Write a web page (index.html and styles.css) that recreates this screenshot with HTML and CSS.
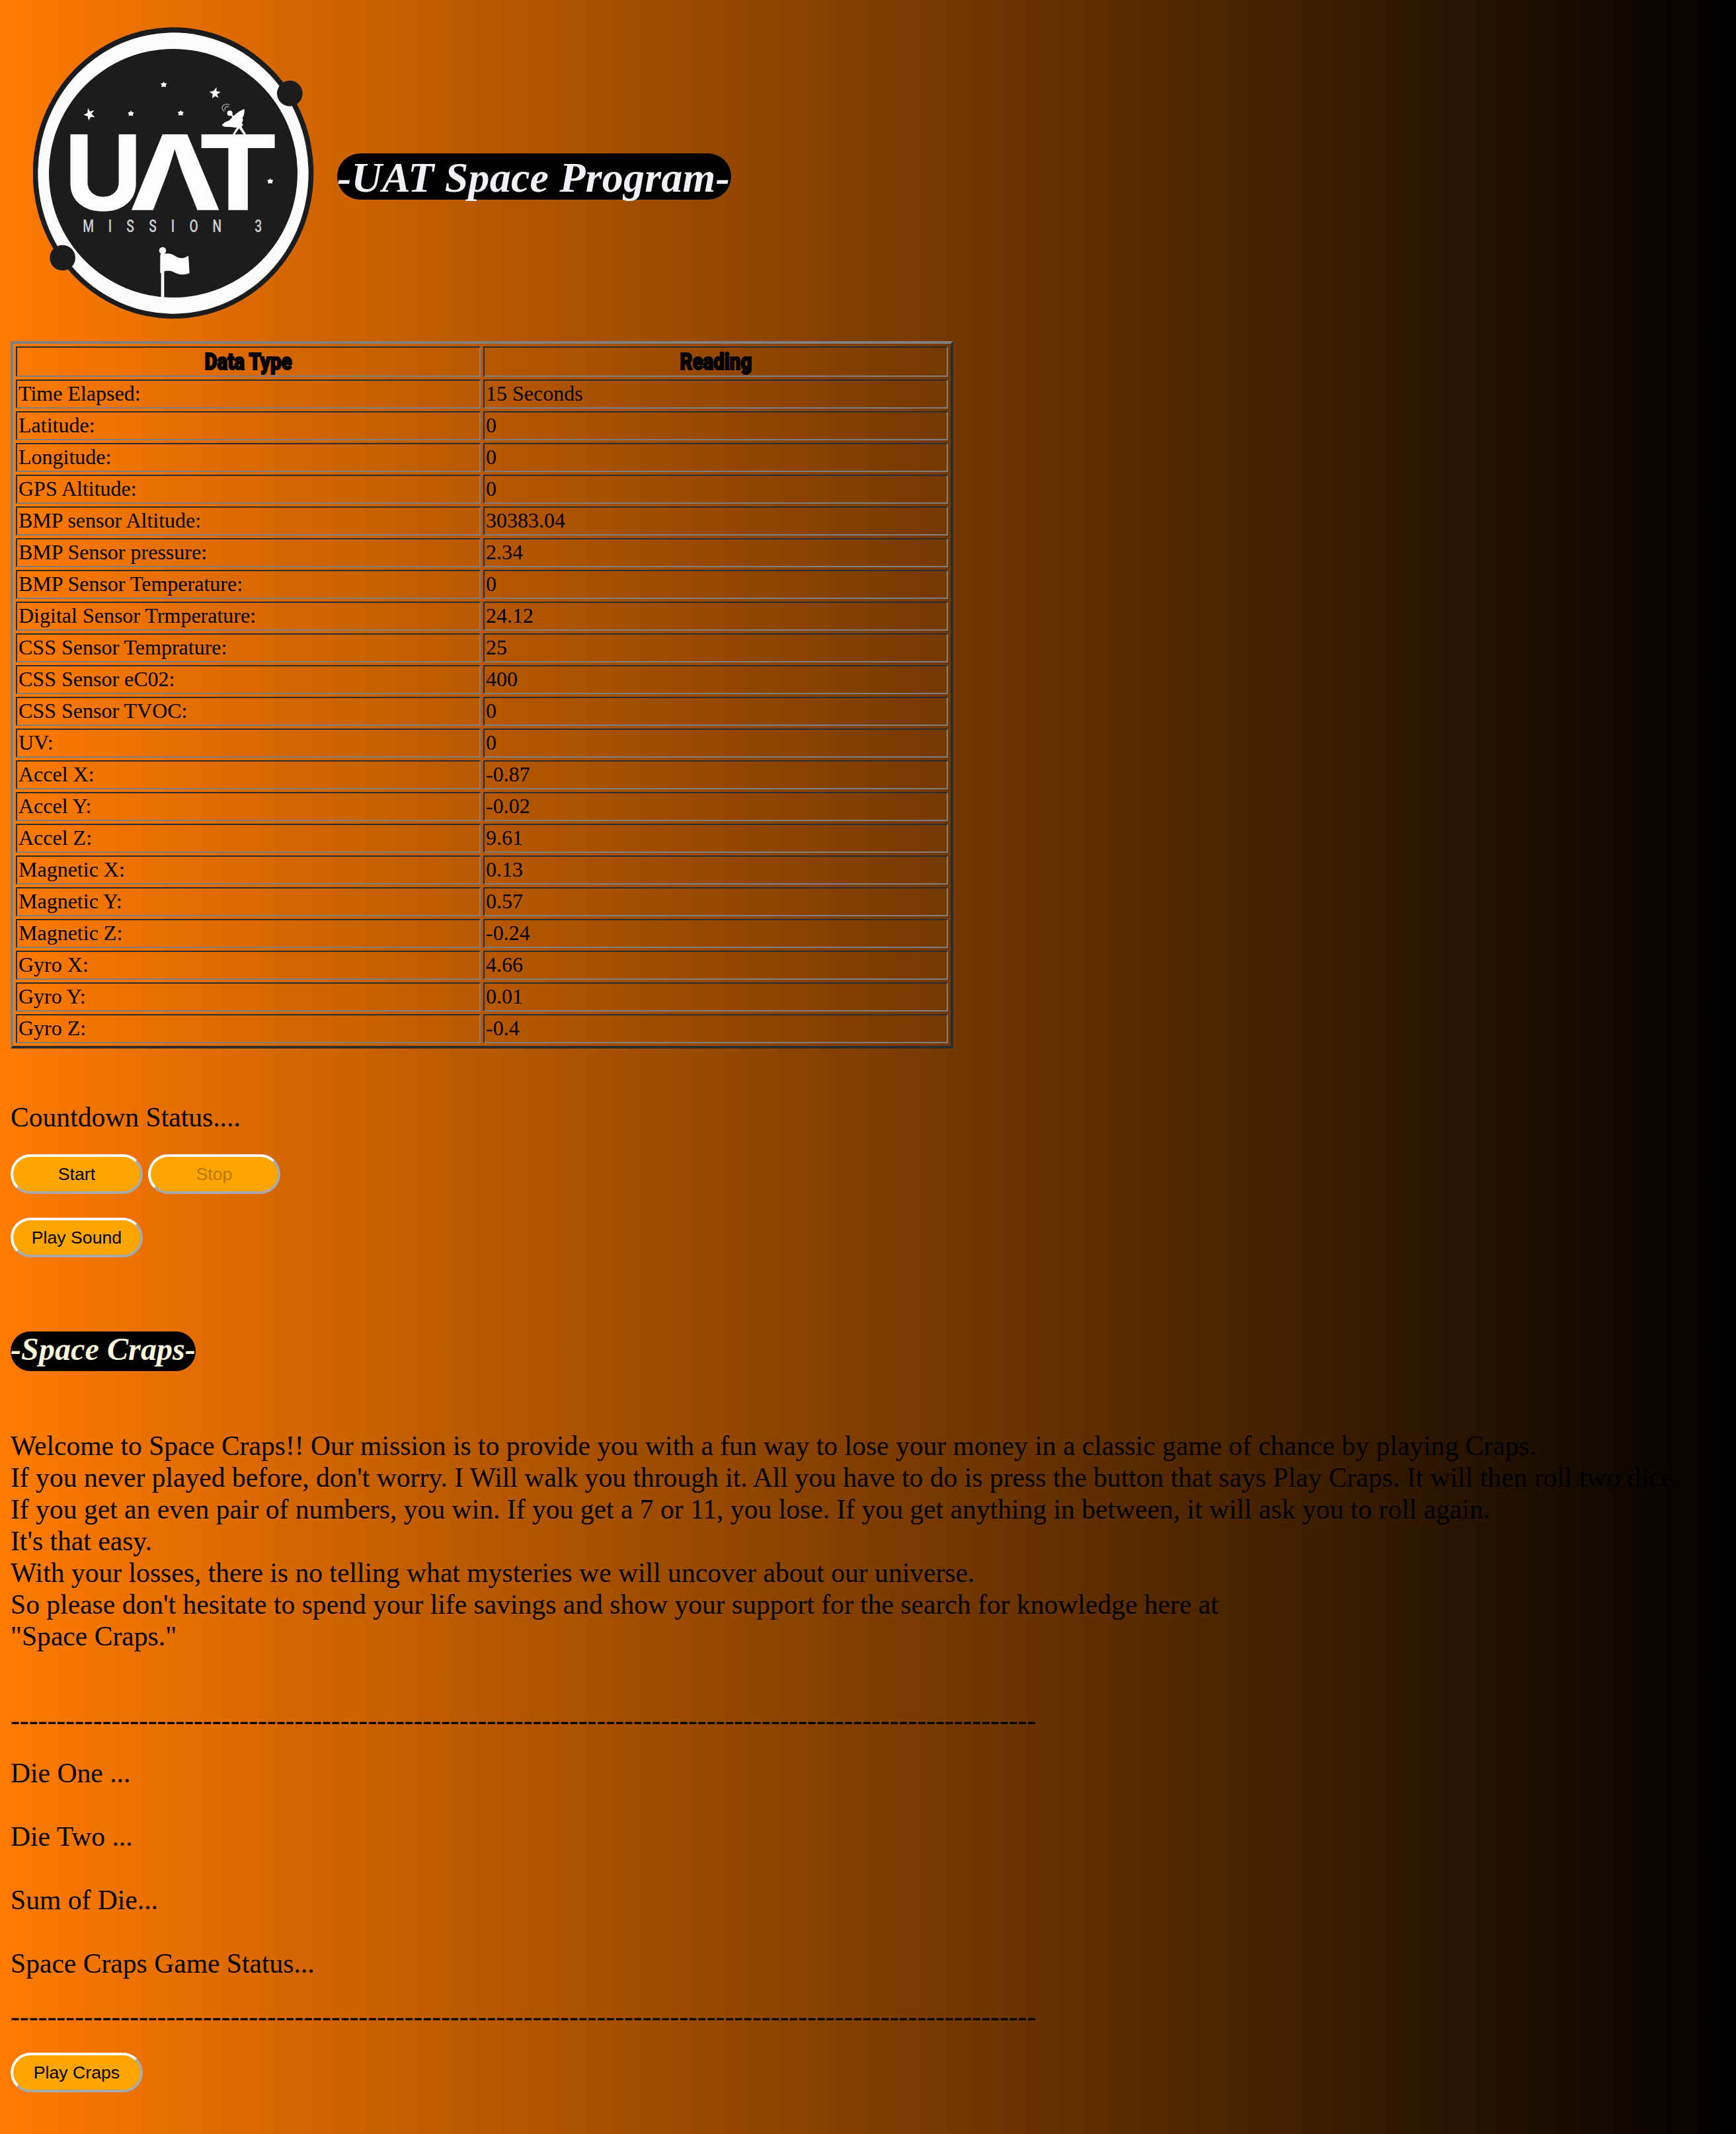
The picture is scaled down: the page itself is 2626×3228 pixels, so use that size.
FILE: index.html
```html
<!DOCTYPE html>
<html lang="en">
<head>
<meta charset="utf-8">
<title>UAT Space Program</title>
<link rel="stylesheet" href="styles.css">
</head>
<body>
<header class="header">
  <svg class="logo" viewBox="150 120 1278 1332" role="img" aria-label="UAT Mission 3">
    <ellipse cx="786" cy="785" rx="637" ry="661" fill="#1c1c1e"/>
    <ellipse cx="786" cy="786" rx="614" ry="638" fill="#fcfcfb"/>
    <circle cx="786" cy="786" r="564" fill="#1c1c1e"/>
    <circle cx="1315" cy="424" r="58" fill="#1c1c1e"/>
    <circle cx="284" cy="1170" r="58" fill="#1c1c1e"/>
    <g fill="#fff">
      <path d="M399 490l9 16 20-6-13 17 16 15-19-2-10 17-4-20-19-6 18-8z"/>
      <path d="M983 396l-1 18 19 3-16 11 7 17-15-9-14 10 2-19-15-11 18-3z"/>
      <path id="s" d="M743 371l5 7 9 1-5 8 1 8-10-2-10 2 1-8-5-8 9-1z"/>
      <use href="#s" x="-149" y="131"/>
      <use href="#s" x="77" y="129"/>
      <use href="#s" x="483" y="438"/>
      <path d="M1108 494C1070 510 1052 535 1040 547C1023 553 1010 560 1007 570C1025 580 1050 574 1064 579L1075 578L1054 612H1064L1085 582L1107 612H1118L1096 575L1103 568L1098 558L1103 545L1100 535C1108 525 1111 505 1108 494Z"/>
      <circle cx="1043" cy="514" r="12"/>
      <path d="M1046 516l14 16" stroke="#fff" stroke-width="7"/>
      <path d="M1018 506Q1000 490 1015 477Q1028 469 1042 476M1023 500Q1017 489 1026 485Q1033 482 1038 487" fill="none" stroke="#aaa" stroke-width="4"/>
      <circle cx="738" cy="1137" r="16"/>
      <path d="M731 1145h14v210h-14z"/>
      <path d="M727 1156C750 1148 775 1148 795 1162C820 1178 838 1172 855 1160L860 1239C840 1249 815 1249 790 1235C768 1225 748 1227 727 1240Z"/>
    </g>
    <g class="wordmark">
      <text transform="translate(290 951)" textLength="356" lengthAdjust="spacingAndGlyphs">U</text>
      <text transform="translate(588 951)" textLength="415" lengthAdjust="spacingAndGlyphs">Λ</text>
      <text transform="translate(897 951)" textLength="367" lengthAdjust="spacingAndGlyphs">T</text>
    </g>
    <text class="mission" transform="translate(0 1053) scale(.72 1)" x="557 694 821 963 1090 1221 1368 1628">MISSION3</text>
  </svg>
  <h1 class="title">-UAT Space Program-</h1>
</header>

<table class="readings">
  <tr><th><span class="heading">Data Type</span></th><th><span class="heading">Reading</span></th></tr>
  <tr><td>Time Elapsed:</td><td>15 Seconds</td></tr>
  <tr><td>Latitude:</td><td>0</td></tr>
  <tr><td>Longitude:</td><td>0</td></tr>
  <tr><td>GPS Altitude:</td><td>0</td></tr>
  <tr><td>BMP sensor Altitude:</td><td>30383.04</td></tr>
  <tr><td>BMP Sensor pressure:</td><td>2.34</td></tr>
  <tr><td>BMP Sensor Temperature:</td><td>0</td></tr>
  <tr><td>Digital Sensor Trmperature:</td><td>24.12</td></tr>
  <tr><td>CSS Sensor Temprature:</td><td>25</td></tr>
  <tr><td>CSS Sensor eC02:</td><td>400</td></tr>
  <tr><td>CSS Sensor TVOC:</td><td>0</td></tr>
  <tr><td>UV:</td><td>0</td></tr>
  <tr><td>Accel X:</td><td>-0.87</td></tr>
  <tr><td>Accel Y:</td><td>-0.02</td></tr>
  <tr><td>Accel Z:</td><td>9.61</td></tr>
  <tr><td>Magnetic X:</td><td>0.13</td></tr>
  <tr><td>Magnetic Y:</td><td>0.57</td></tr>
  <tr><td>Magnetic Z:</td><td>-0.24</td></tr>
  <tr><td>Gyro X:</td><td>4.66</td></tr>
  <tr><td>Gyro Y:</td><td>0.01</td></tr>
  <tr><td>Gyro Z:</td><td>-0.4</td></tr>
</table>

<p class="countdown">Countdown Status....</p>
<div class="controls">
  <button class="button">Start</button>
  <button class="button" disabled>Stop</button>
</div>
<div class="controls sound">
  <button class="button">Play Sound</button>
</div>

<h2 class="subtitle">-Space Craps-</h2>
<p class="intro">Welcome to Space Craps!! Our mission is to provide you with a fun way to lose your money in a classic game of chance by playing Craps.<br>
If you never played before, don't worry. I Will walk you through it. All you have to do is press the button that says Play Craps. It will then roll two dice.<br>
If you get an even pair of numbers, you win. If you get a 7 or 11, you lose. If you get anything in between, it will ask you to roll again.<br>
It's that easy.<br>
With your losses, there is no telling what mysteries we will uncover about our universe.<br>
So please don't hesitate to spend your life savings and show your support for the search for knowledge here at<br>
"Space Craps."</p>

<p class="rule">----------------------------------------------------------------------------------------------------------------</p>
<div class="game">
  <p>Die One ...</p>
  <p>Die Two ...</p>
  <p>Sum of Die...</p>
  <p>Space Craps Game Status...</p>
</div>
<p class="rule rule-end">----------------------------------------------------------------------------------------------------------------</p>
<div class="controls">
  <button class="button">Play Craps</button>
</div>
</body>
</html>
```
FILE: styles.css
```css
* {
  box-sizing: border-box;
}

body {
  margin: 0;
  padding: 0 16px;
  min-height: 3228px;
  background: linear-gradient(to right, #ff7b00, #000);
  color: #000;
  font: 41.6px/48px "Liberation Serif", "Times New Roman", serif;
}

p, h1, h2 {
  margin: 0;
}

.header {
  display: flex;
  align-items: flex-start;
  gap: 34px;
  height: 516px;
  padding: 40px 0 0 34px;
}

.logo {
  width: 426px;
  height: 444px;
}

.wordmark {
  fill: #fdfdfd;
  stroke: #fdfdfd;
  stroke-width: 5px;
  font: 700 464px Inter, sans-serif;
}

.mission {
  fill: #d0d0d2;
  font: 500 80px Roboto, sans-serif;
  text-anchor: middle;
}

.title {
  width: 596px;
  height: 70px;
  margin-top: 192px;
  padding-top: 1px;
  border-radius: 35px;
  background: #000;
  color: #f0f0f5;
  font-size: 64px;
  font-style: italic;
  letter-spacing: 0.2px;
  line-height: 71px;
  white-space: nowrap;
}

.readings {
  width: 1426px;
  table-layout: fixed;
  border: 4px solid;
  border-color: #808080 #2c2c2c #2c2c2c #808080;
  border-spacing: 4px;
  font-size: 32px;
  line-height: 36px;
}

.readings th,
.readings td {
  height: 44px;
  padding: 1px 2px 3px;
  border: 2px solid;
  border-color: #2c2c2c #808080 #808080 #2c2c2c;
  text-align: left;
}

.readings th {
  height: 46px;
  padding: 3px 2px 1px;
  text-align: center;
}

.heading {
  display: inline-block;
  font: 900 35px/38px Roboto, sans-serif;
  transform: scaleX(0.84);
  -webkit-text-stroke: 2px #000;
}

.countdown {
  margin-top: 80px;
}

.controls {
  display: flex;
  gap: 8px;
  margin-top: 32px;
}

.sound {
  margin-top: 36px;
}

.button {
  width: 200px;
  height: 60px;
  padding: 0;
  border: 4px solid;
  border-color: #fff #a9a9a9 #a9a9a9 #fff;
  border-radius: 30px;
  background: #ffa500;
  color: #000;
  font: 26.667px "Liberation Sans", Arial, sans-serif;
}

.button:disabled {
  color: #b97800;
}

.subtitle {
  width: 280px;
  height: 60px;
  margin-top: 112px;
  border-radius: 30px;
  background: #000;
  color: #fff8dc;
  font-size: 48px;
  font-style: italic;
  letter-spacing: 0.1px;
  line-height: 53px;
}

.intro {
  margin-top: 89px;
  white-space: nowrap;
}

.rule {
  margin-top: 79px;
  white-space: nowrap;
}

.game {
  display: grid;
  gap: 48px;
  margin-top: 32px;
}

.rule-end {
  margin-top: 32px;
}

.rule-end + .controls {
  margin-top: 31px;
}
```
